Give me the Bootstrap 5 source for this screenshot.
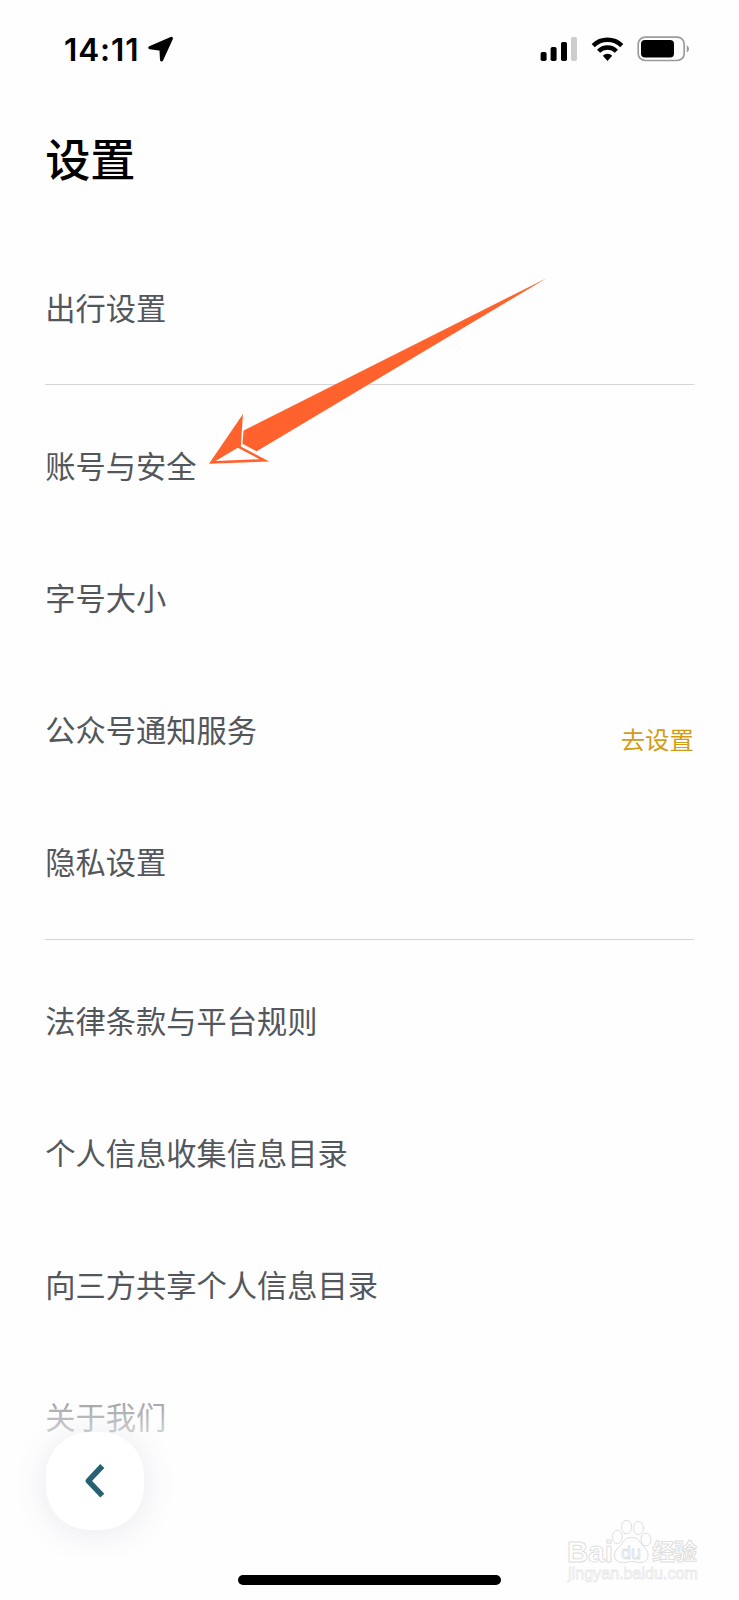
<!DOCTYPE html>
<html lang="zh-CN">
<head>
<meta charset="utf-8">
<meta name="viewport" content="width=device-width, initial-scale=1">
<title>设置</title>
<link rel="stylesheet" href="https://cdn.jsdelivr.net/npm/bootstrap@5.3.0/dist/css/bootstrap.min.css">
<style>
body{background:#fefefe;font-family:"Noto Sans CJK SC",sans-serif;color:#53575c}
.screen{width:739px;height:1600px}
.statusbar{height:98px;padding:0 49px 0 64px}
.clock{font:600 31.5px/1 Inter,sans-serif;letter-spacing:.9px;color:#000;width:84px;padding-top:2px}
.page-title{font-size:45.2px;font-weight:500;line-height:66px;color:#000;margin:27px 45.2px 51px}
.settings{padding:0 45.2px}
.setting-row{height:132.2px;font-size:30.25px;line-height:44px;white-space:nowrap;border:0;padding:0 0 3px;background:none;color:inherit}
.rule{height:1px;background:#d4d5d6;margin:10px 0 15px}
.go-link{font-size:24.4px;line-height:36px;color:#d29c16;text-decoration:none;margin-top:20px}
.arrow{left:200px;top:270px}
.fade-out{left:0;right:0;top:1380px;height:220px;background:linear-gradient(rgba(254,254,254,.28),rgba(254,254,254,.72) 52px,#fefefe 80px)}
.back{left:45.5px;top:1431.5px;width:98px;height:98px;border-radius:43px;background:#fff;border:0;box-shadow:0 3px 34px rgba(80,85,140,.12)}
.home-bar{left:238px;top:1575px;width:263px;height:10px;border-radius:5px;background:#000}
.watermark{left:560px;top:1512px}
</style>
</head>
<body>
<div class="screen position-relative overflow-hidden">
  <header class="statusbar d-flex align-items-center">
    <span class="clock">14:11</span>
    <svg width="26" height="26" viewBox="0 -.5 26 26"><path d="M1.9 11.2 23.3 2 13.6 23.3 13 12.6Z" stroke="#000" stroke-width="3.2" stroke-linejoin="round"/></svg>
    <svg class="ms-auto" width="151" height="28" viewBox="539 35 151 28">
      <g><rect x="540.6" y="52" width="6" height="9" rx="1.8"/><rect x="550.6" y="47" width="6" height="14" rx="1.8"/><rect x="561" y="42" width="6" height="19" rx="1.8"/><rect x="571" y="37" width="6" height="24" rx="1.8" fill="#cdcdcd"/></g>
      <g fill="none" stroke="#000" stroke-width="4.4"><path d="M593.2 45.6A20.5 20.5 0 0 1 621.8 45.6"/><path d="M598.6 51.2A12.7 12.7 0 0 1 616.4 51.2"/></g>
      <path d="M602.8 55.8A6.7 6.7 0 0 1 612.2 55.8L607.5 61Z"/>
      <rect x="638.2" y="37.1" width="46" height="23.4" rx="7" fill="none" stroke="#9b9b9b" stroke-width="1.7"/>
      <rect x="641" y="40" width="33" height="17.4" rx="4"/>
      <path d="M686.8 45.2a4.2 4.2 0 0 1 0 7.4z" fill="#9b9b9b"/>
    </svg>
  </header>
  <h1 class="page-title">设置</h1>
  <main class="settings">
    <div class="list-group list-group-flush">
      <div class="setting-row d-flex align-items-center">出行设置</div>
    </div>
    <div class="rule"></div>
    <div class="list-group list-group-flush">
      <div class="setting-row d-flex align-items-center">账号与安全</div>
      <div class="setting-row d-flex align-items-center">字号大小</div>
      <div class="setting-row d-flex align-items-center justify-content-between">公众号通知服务<a class="go-link" href="#">去设置</a></div>
      <div class="setting-row d-flex align-items-center">隐私设置</div>
    </div>
    <div class="rule"></div>
    <div class="list-group list-group-flush">
      <div class="setting-row d-flex align-items-center">法律条款与平台规则</div>
      <div class="setting-row d-flex align-items-center">个人信息收集信息目录</div>
      <div class="setting-row d-flex align-items-center">向三方共享个人信息目录</div>
      <div class="setting-row d-flex align-items-center">关于我们</div>
    </div>
  </main>

  <svg class="arrow position-absolute" width="350" height="200" viewBox="200 270 350 200">
    <path d="M547 278 243.6 430.5 242.4 443.8 256.7 451.3Z" fill="#ff622d"/>
    <path d="M209 463.7 243 414 240.8 446.6 269.3 461.4Z" fill="#ff622d"/>
    <path d="M237.8 447.8 259.5 459.2 215.5 461Z" fill="#fff"/>
  </svg>

  <div class="fade-out position-absolute"></div>
  <button class="back position-absolute p-0" aria-label="返回">
    <svg class="d-block" width="98" height="98" viewBox="0 0 98 98"><path d="M56.3 34 42.3 48.8 56.3 63.6" fill="none" stroke="#286272" stroke-width="5.6" stroke-linejoin="round"/></svg>
  </button>

  <svg class="watermark position-absolute" width="150" height="80" viewBox="560 1512 150 80" fill="#fefefe" stroke="#dedede" stroke-width="1">
    <g font-family="Liberation Sans,sans-serif" font-weight="bold">
      <text x="567" y="1561.5" font-size="30" textLength="46" lengthAdjust="spacingAndGlyphs">Bai</text>
      <ellipse cx="617.3" cy="1537" rx="5" ry="6.6"/><ellipse cx="626.6" cy="1527" rx="5" ry="6.8"/><ellipse cx="638.5" cy="1528" rx="5" ry="6.6"/><ellipse cx="646" cy="1539.5" rx="5" ry="6.4"/>
      <path d="M631.5 1537.5C623 1537.5 623.5 1544 618 1548 612 1553 614 1562.5 622 1562.5 627 1562.5 628 1561.5 631.5 1561.5 635 1561.5 638 1562.5 642 1562.5 649 1562 650 1552 645 1548 639 1543 640 1537.5 631.5 1537.5Z"/>
      <text x="621" y="1558.5" font-size="19" font-weight="normal" textLength="20" lengthAdjust="spacingAndGlyphs" stroke-width=".9">du</text>
      <text x="652" y="1560" font-size="23" textLength="45" font-family="Noto Sans CJK SC,sans-serif">经验</text>
    </g>
    <text x="568" y="1578.5" font-size="16" font-family="Liberation Sans,sans-serif" textLength="130" lengthAdjust="spacingAndGlyphs" fill="#fff" stroke="#e9e9e9" stroke-width=".8">jingyan.baidu.com</text>
  </svg>
  <div class="home-bar position-absolute"></div>
</div>
<script src="https://cdn.jsdelivr.net/npm/bootstrap@5.3.0/dist/js/bootstrap.bundle.min.js"></script>
</body>
</html>
